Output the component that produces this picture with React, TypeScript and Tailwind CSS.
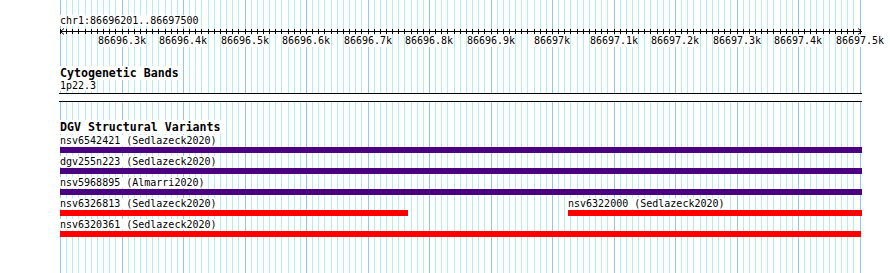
import React from "react";

const START = 86696200;
const PX_PER_BP = 0.615;
const ORIGIN = 60;

const toX = (bp: number) => Math.round(ORIGIN + (bp - START) * PX_PER_BP);

const gridlines = Array.from({ length: 131 }, (_, i) => ({
  x: Math.round(ORIGIN + i * 6.15),
  major: i % 10 === 0,
}));

const tickLabels = [
  "86696.3k", "86696.4k", "86696.5k", "86696.6k", "86696.7k", "86696.8k",
  "86696.9k", "86697k", "86697.1k", "86697.2k", "86697.3k", "86697.4k", "86697.5k",
].map((label, i) => ({ label, x: toX(START + (i + 1) * 100) }));

type Feature = { name: string; left: number; right: number; color: string };

const rows: Feature[][] = [
  [{ name: "nsv6542421 (Sedlazeck2020)", left: 60, right: 862, color: "bg-[#4b0082]" }],
  [{ name: "dgv255n223 (Sedlazeck2020)", left: 60, right: 862, color: "bg-[#4b0082]" }],
  [{ name: "nsv5968895 (Almarri2020)", left: 60, right: 862, color: "bg-[#4b0082]" }],
  [
    { name: "nsv6326813 (Sedlazeck2020)", left: 60, right: 408, color: "bg-[#ff0000]" },
    { name: "nsv6322000 (Sedlazeck2020)", left: 568, right: 862, color: "bg-[#ff0000]" },
  ],
  [{ name: "nsv6320361 (Sedlazeck2020)", left: 60, right: 861, color: "bg-[#ff0000]" }],
];

function Grid() {
  return (
    <div className="absolute inset-0">
      {gridlines.map((g) => (
        <div
          key={g.x}
          className={g.major ? "absolute top-0 bottom-0 w-px bg-[#8cc8f0]" : "absolute top-0 bottom-0 w-px bg-[#b0eef0]"}
          style={{ left: g.x }}
        />
      ))}
    </div>
  );
}

function Ruler() {
  return (
    <svg width="890" height="8" className="block" shapeRendering="crispEdges">
      <line x1="60" y1="4.5" x2="862" y2="4.5" stroke="#000" />
      {gridlines.map((g) => (
        <line key={g.x} x1={g.x + 0.5} y1="2" x2={g.x + 0.5} y2="7" stroke="#000" />
      ))}
      <polyline points="64,1.5 60.5,4.5 64,7.5" fill="none" stroke="#000" shapeRendering="auto" />
      <polyline points="858,1.5 861.5,4.5 858,7.5" fill="none" stroke="#000" shapeRendering="auto" />
    </svg>
  );
}

function FeatureRow({ features }: { features: Feature[] }) {
  return (
    <div className="relative h-[21px]">
      {features.map((f) => (
        <div key={f.name} className="absolute top-0" style={{ left: f.left, width: f.right - f.left }}>
          <div className="h-[12px] whitespace-nowrap">
            <span className="bg-white">{f.name}</span>
          </div>
          <div className={`h-[6px] ${f.color}`} />
        </div>
      ))}
    </div>
  );
}

export default function App() {
  return (
    <div className="relative w-[890px] h-[273px] overflow-hidden bg-white text-black font-['DejaVu_Sans_Mono',monospace] text-[10px] leading-[12px]">
      <Grid />
      <div className="relative pt-[15px]">
        {/* ruler */}
        <div className="pl-[60px]">
          <span className="bg-white">chr1:86696201..86697500</span>
        </div>
        <Ruler />
        <div className="relative h-[12px]">
          {tickLabels.map((t) => (
            <span
              key={t.label}
              className="absolute top-0 -translate-x-1/2 bg-white whitespace-nowrap"
              style={{ left: t.x }}
            >
              {t.label}
            </span>
          ))}
        </div>

        {/* cytobands */}
        <div className="mt-[20px] pl-[60px] h-[12px]">
          <span className="bg-white font-bold text-[11.6px]">Cytogenetic Bands</span>
        </div>
        <div className="mt-px pl-[60px]">
          <span className="bg-white">1p22.3</span>
        </div>
        <div className="mt-px ml-[59px] w-[803px] h-[9px] border-y border-black bg-white" />

        {/* DGV */}
        <div className="mt-[19px] pl-[60px] h-[12px]">
          <span className="bg-white font-bold text-[11.6px]">DGV Structural Variants</span>
        </div>
        <div className="mt-[2px]">
          {rows.map((r, i) => (
            <FeatureRow key={i} features={r} />
          ))}
        </div>
      </div>
    </div>
  );
}
